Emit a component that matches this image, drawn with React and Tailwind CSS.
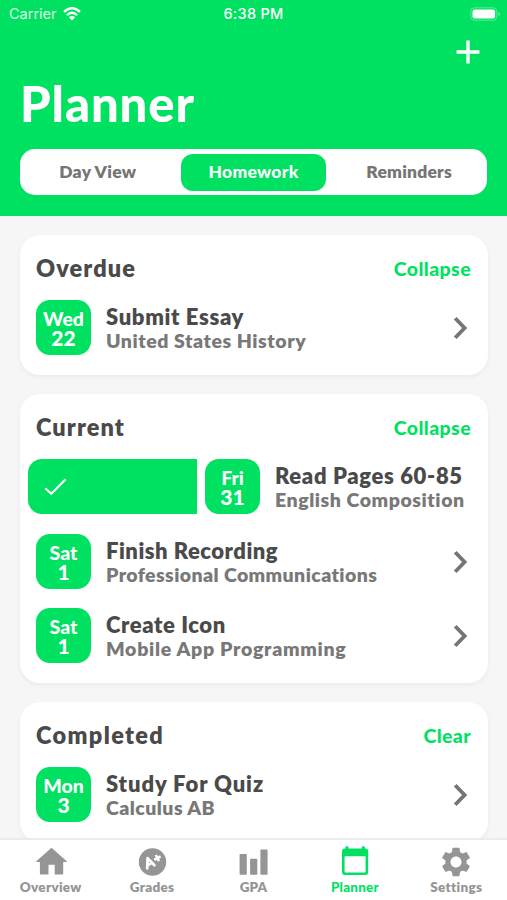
import { useState } from 'react'

// ── Data ───────────────────────────────────────────────────────────────────────
const SEGMENTS = [
  { label: 'Day View', tracking: 'tracking-[0.3px]' },
  { label: 'Homework', tracking: 'tracking-[0.3px]' },
  { label: 'Reminders', tracking: 'tracking-[0.2px]' },
]

const SECTIONS = [
  {
    title: 'Overdue',
    action: 'Collapse',
    tracking: 'tracking-[1.1px]',
    items: [
      { day: 'Wed', date: '22', title: 'Submit Essay', course: 'United States History', titleTracking: 'tracking-[0.65px]', courseTracking: 'tracking-[0.55px]' },
    ],
  },
  {
    title: 'Current',
    action: 'Collapse',
    tracking: 'tracking-[1.1px]',
    items: [
      { day: 'Fri', date: '31', title: 'Read Pages 60-85', course: 'English Composition', swiped: true, titleTracking: 'tracking-[0.65px]', courseTracking: 'tracking-[0.55px]' },
      { day: 'Sat', date: '1', title: 'Finish Recording', course: 'Professional Communications', titleTracking: 'tracking-[0.5px]', courseTracking: 'tracking-[0.4px]' },
      { day: 'Sat', date: '1', title: 'Create Icon', course: 'Mobile App Programming', titleTracking: 'tracking-[0.6px]', courseTracking: 'tracking-[0.7px]' },
    ],
  },
  {
    title: 'Completed',
    action: 'Clear',
    tracking: 'tracking-[1.35px]',
    items: [
      { day: 'Mon', date: '3', title: 'Study For Quiz', course: 'Calculus AB', titleTracking: 'tracking-[0.9px]', courseTracking: 'tracking-[0.45px]' },
    ],
  },
]

const TABS = [
  { label: 'Overview', Icon: HomeIcon, tracking: 'tracking-[0.3px]' },
  { label: 'Grades', Icon: GradeIcon, tracking: 'tracking-[0.3px]' },
  { label: 'GPA', Icon: BarsIcon, tracking: 'tracking-[0px]' },
  { label: 'Planner', Icon: CalendarIcon, tracking: 'tracking-[0.2px]' },
  { label: 'Settings', Icon: GearIcon, tracking: 'tracking-[0.3px]' },
]

// ── Icons ──────────────────────────────────────────────────────────────────────
function HomeIcon() {
  return (
    <svg width="32" height="30" viewBox="0 0 32 30" fill="currentColor">
      <path d="M16.5 0.8L31.8 14.3Q32 15 31.2 15.1H28.2V26.6Q28.2 27.6 27.2 27.6H19.7V17.8H13.5V27.6H5.9Q4.9 27.6 4.9 26.6V15.1H1.8Q1 15 1.3 14.3Z" />
    </svg>
  )
}

function GradeIcon() {
  return (
    <svg width="32" height="30" viewBox="0 0 32 30" fill="none">
      <circle cx="16.5" cy="15" r="13.7" fill="currentColor" />
      <path d="M11.2 21.4L11.6 11.2L18.4 18.2M11.6 18.4L15.6 15.8" stroke="white" strokeWidth="2.7" strokeLinejoin="round" strokeLinecap="round" />
      <path d="M18.2 12.8L24.6 9.4M19.8 8L23 14.2" stroke="white" strokeWidth="2.6" />
    </svg>
  )
}

function BarsIcon() {
  return (
    <svg width="32" height="30" viewBox="0 0 32 30" fill="currentColor">
      <rect x="2.6" y="7" width="7.2" height="20.7" rx="0.8" />
      <rect x="13.1" y="11.7" width="7.2" height="16" rx="0.8" />
      <rect x="23.4" y="2.6" width="7.2" height="25.1" rx="0.8" />
    </svg>
  )
}

function CalendarIcon() {
  return (
    <svg width="32" height="30" viewBox="0 0 32 30" fill="currentColor" className="overflow-visible">
      <path fillRule="evenodd" d="M6.4 0.2Q6.4 -0.8 7.4 -0.8H8.4Q9.4 -0.8 9.4 0.2V1.6H22.8V0.2Q22.8 -0.8 23.8 -0.8H24.8Q25.8 -0.8 25.8 0.2V1.6H26.2Q29.2 1.6 29.2 4.6V25Q29.2 28 26.2 28H6Q3 28 3 25V4.6Q3 1.6 6 1.6H6.4ZM5.6 9.2V24.4Q5.6 25.6 6.8 25.6H25.4Q26.6 25.6 26.6 24.4V9.2Z" />
    </svg>
  )
}

function GearIcon() {
  return (
    <svg width="34" height="34" viewBox="0 0 24 24" fill="currentColor" className="-my-0.5">
      <path d="M19.43 12.98c.04-.32.07-.64.07-.98s-.03-.66-.07-.98l2.11-1.65c.19-.15.24-.42.12-.64l-2-3.46c-.12-.22-.39-.3-.61-.22l-2.49 1c-.52-.4-1.08-.73-1.69-.98l-.38-2.65C14.46 2.18 14.25 2 14 2h-4c-.25 0-.46.18-.49.42l-.38 2.65c-.61.25-1.17.59-1.69.98l-2.49-1c-.23-.09-.49 0-.61.22l-2 3.46c-.13.22-.07.49.12.64l2.11 1.65c-.04.32-.07.65-.07.98s.03.66.07.98l-2.11 1.65c-.19.15-.24.42-.12.64l2 3.46c.12.22.39.3.61.22l2.49-1c.52.4 1.08.73 1.69.98l.38 2.65c.03.24.24.42.49.42h4c.25 0 .46-.18.49-.42l.38-2.65c.61-.25 1.17-.59 1.69-.98l2.49 1c.23.09.49 0 .61-.22l2-3.46c.12-.22.07-.49-.12-.64l-2.11-1.65zM12 15.9c-2.15 0-3.9-1.75-3.9-3.9s1.75-3.9 3.9-3.9 3.9 1.75 3.9 3.9-1.75 3.9-3.9 3.9z" />
    </svg>
  )
}

function WifiIcon() {
  return (
    <svg width="18" height="14" viewBox="0 0 18 14" fill="none" stroke="white" strokeWidth="2.3">
      <path d="M1 4.9Q9 -2.3 17 4.9" />
      <path d="M3.9 8.1Q9 3.5 14.1 8.1" />
      <path d="M9 13.6L5.9 10.3Q9 7.9 12.1 10.3Z" fill="white" stroke="none" />
    </svg>
  )
}

function BatteryIcon() {
  return (
    <svg width="31" height="14" viewBox="0 0 31 14" fill="none">
      <rect x="0.8" y="0.8" width="26" height="12.4" rx="3.6" stroke="white" strokeOpacity="0.35" />
      <rect x="2.5" y="2.5" width="22.6" height="9" rx="2.2" fill="white" />
      <path d="M28.4 5V9Q30 8.3 30 7Q30 5.7 28.4 5Z" fill="white" fillOpacity="0.4" />
    </svg>
  )
}

// ── Sub-components ─────────────────────────────────────────────────────────────
function StatusBar() {
  return (
    <div className="grid grid-cols-3 items-center h-7 pl-[9px] pr-[6px] font-['Inter',sans-serif] text-[14.5px] text-white">
      <div className="flex items-center gap-[6px] -mt-px">
        <span className="opacity-85">Carrier</span>
        <WifiIcon />
      </div>
      <span className="-ml-[3px] text-center font-medium tracking-[0.3px] whitespace-nowrap">6:38 PM</span>
      <div className="flex justify-end -mt-px">
        <BatteryIcon />
      </div>
    </div>
  )
}

function DateTile({ day, date }) {
  return (
    <div className="flex flex-col items-center justify-center w-[55px] h-[55px] shrink-0 rounded-[14px] bg-[#00e162] text-white font-black text-[19.5px] leading-[19px] pt-px">
      <span>{day}</span>
      <span className="text-[21px]">{date}</span>
    </div>
  )
}

function HomeworkRow({ item }) {
  return (
    <div className={item.swiped ? 'flex items-center h-[55px] -ml-2' : 'flex items-center h-[55px]'}>
      {item.swiped && (
        <div className="flex items-center w-[169px] h-[55px] mr-2 pl-4 shrink-0 rounded-l-[14px] bg-[#00e162]">
          <svg width="23" height="18" viewBox="0 0 23 18" fill="none">
            <path d="M1.2 10.2L7.3 15.7L21.6 1.3" stroke="white" strokeWidth="2.2" />
          </svg>
        </div>
      )}
      <DateTile day={item.day} date={item.date} />
      <div className="ml-[15px] mt-[3px] flex-1 whitespace-nowrap font-extrabold leading-6">
        <p className={`text-[22px] text-[#4a4a4a] ${item.titleTracking}`}>{item.title}</p>
        <p className={`text-[19.5px] text-[#787878] ${item.courseTracking}`}>{item.course}</p>
      </div>
      {!item.swiped && (
        <svg width="15" height="24" viewBox="0 0 15 24" fill="none" className="mr-[3px] mt-px">
          <path d="M2.2 2.2L11.6 12L2.2 21.8" stroke="#757575" strokeWidth="3.8" />
        </svg>
      )}
    </div>
  )
}

function SectionCard({ section }) {
  return (
    <section className="rounded-[20px] bg-white px-[16.5px] pt-[19px] pb-[19.5px] shadow-[0_2px_5px_rgba(0,0,0,0.05)]">
      <div className="flex items-center justify-between h-[30px] mb-[16.5px]">
        <h2 className={`text-[23.5px] font-extrabold text-[#4a4a4a] ${section.tracking}`}>{section.title}</h2>
        <button className="text-[19.5px] font-black tracking-[0.4px] text-[#00e162]">{section.action}</button>
      </div>
      <div className="flex flex-col gap-[19.5px]">
        {section.items.map(item => <HomeworkRow key={item.title} item={item} />)}
      </div>
    </section>
  )
}

// ── Main component ─────────────────────────────────────────────────────────────
export default function App() {
  const [segment, setSegment] = useState('Homework')
  const [tab, setTab] = useState('Planner')

  return (
    <div className="flex flex-col w-[507px] h-[900px] overflow-hidden bg-[#f6f6f6] font-['Lato',sans-serif]">
      <header className="flex flex-col h-[216px] shrink-0 bg-[#00e162]">
        <StatusBar />
        <div className="flex justify-end h-12 pr-[27px] pt-3">
          <svg width="24" height="24" viewBox="0 0 24 24" stroke="white" strokeWidth="3.4">
            <path d="M12 0.5V23.5M0.5 12H23.5" />
          </svg>
        </div>
        <h1 className="h-[73px] pl-5 text-[49px] leading-[54px] font-black tracking-[0.9px] text-white">Planner</h1>
        <div className="grid grid-cols-3 items-center h-[46px] mx-5 rounded-[15px] bg-white">
          {SEGMENTS.map(s => (
            <button
              key={s.label}
              onClick={() => setSegment(s.label)}
              className={`h-[37px] mx-[5px] rounded-xl text-[17.5px] ${s.tracking} ${
                segment === s.label ? 'bg-[#00e162] text-white font-black' : 'text-[#757575] font-extrabold'
              }`}
            >
              {s.label}
            </button>
          ))}
        </div>
      </header>

      <main className="flex flex-col flex-1 gap-[19px] min-h-0 overflow-hidden px-[19.5px] pt-[18.5px]">
        {SECTIONS.map(s => (
          <div key={s.title} className="shrink-0">
            <SectionCard section={s} />
          </div>
        ))}
      </main>

      <nav className="grid grid-cols-5 h-[62px] shrink-0 border-t-2 border-[#ebebeb] bg-white">
        {TABS.map(({ label, Icon, tracking }) => (
          <button
            key={label}
            onClick={() => setTab(label)}
            className={`flex flex-col items-center pt-[7px] ${tab === label ? 'text-[#00e162] font-black' : 'text-[#959595] font-extrabold'}`}
          >
            <Icon />
            <span className={`text-[13.5px] leading-5 ${tracking}`}>{label}</span>
          </button>
        ))}
      </nav>
    </div>
  )
}
